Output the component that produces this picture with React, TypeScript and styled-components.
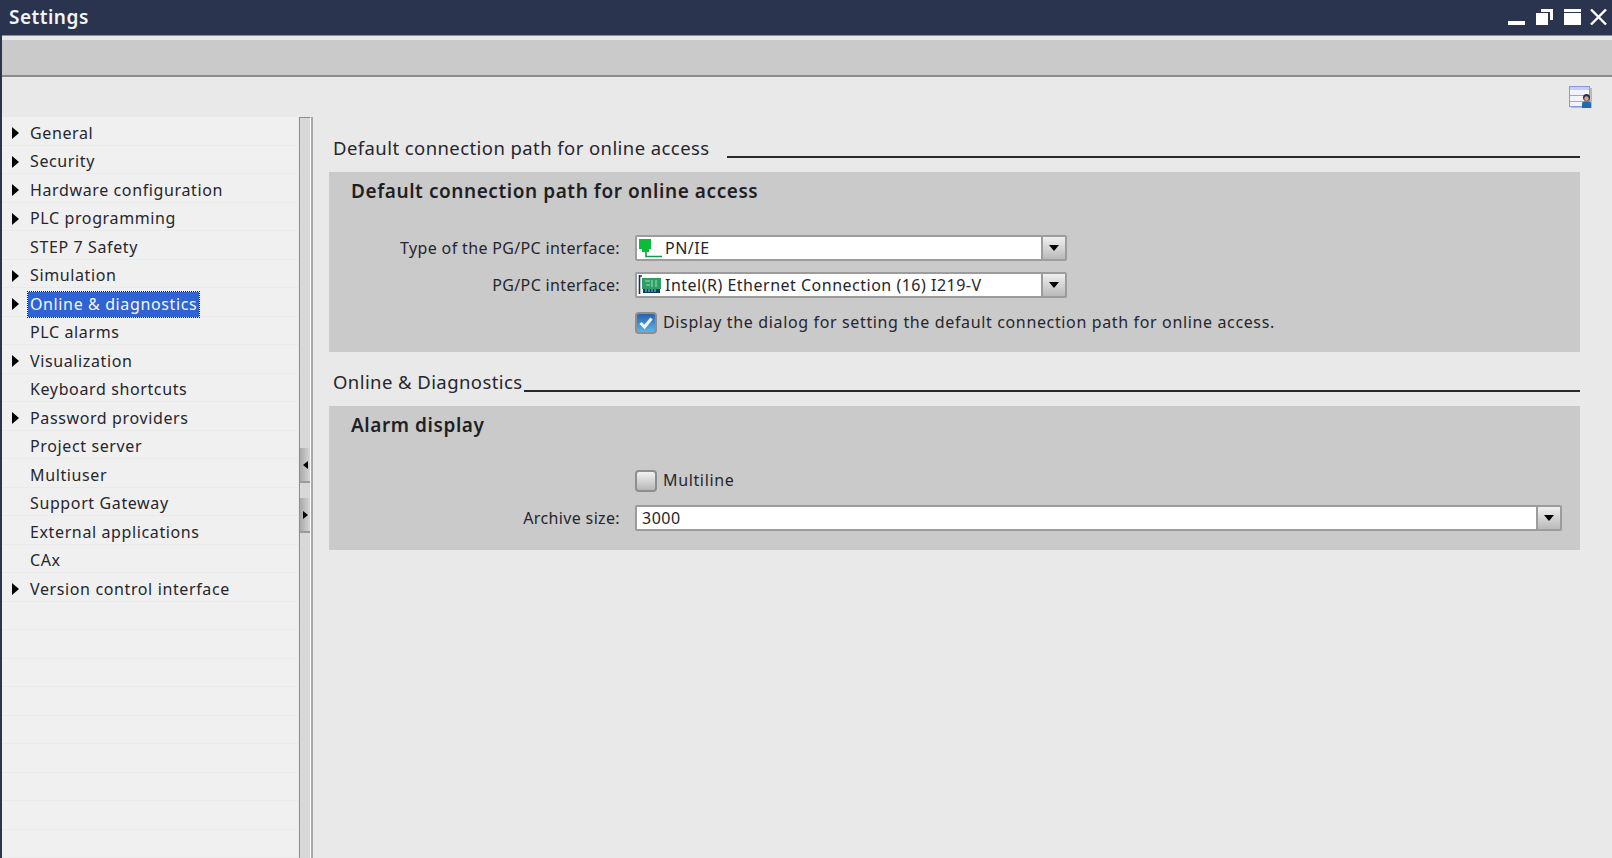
import React from 'react';
import styled, { createGlobalStyle } from 'styled-components';

const GlobalStyle = createGlobalStyle`
  html, body {
    margin: 0;
    padding: 0;
    height: 100%;
    overflow: hidden;
    background: #e9e9e9;
  }
  body {
    font-family: "Noto Sans", "Open Sans", sans-serif;
    color: #26262e;
  }
`;

const Page = styled.div`
  width: 1612px;
  height: 858px;
  box-sizing: border-box;
  border-left: 2px solid #2b344f;
  display: flex;
  flex-direction: column;
  overflow: hidden;
`;

const TitleBar = styled.div`
  height: 33px;
  flex: none;
  background: #2b344f;
  display: flex;
  align-items: center;
  justify-content: space-between;
  padding: 0 5px 2px 7px;
  border-bottom: 1px solid #8a8f9c;
`;

const Title = styled.div`
  color: #f2f4f8;
  font-size: 19px;
  font-weight: 600;
  letter-spacing: 0.5px;
`;

const WindowButtons = styled.div`
  display: flex;
  align-items: center;
  gap: 11px;
`;

const Toolbar = styled.div`
  height: 35px;
  flex: none;
  margin-top: 4px;
  background: #cacaca;
  border-bottom: 2px solid #8b8b8b;
`;

const Body = styled.div`
  flex: 1;
  min-height: 0;
  display: flex;
  background: #e9e9e9;
`;

const Nav = styled.div`
  width: 296px;
  flex: none;
  margin-top: 40px;
  background: #f0f0f0;
`;

const Row = styled.div`
  height: 28.5px;
  box-sizing: border-box;
  display: flex;
  align-items: center;
  padding: 5px 0 0 10px;
  border-bottom: 1px solid #eaeaea;
`;

const Caret = styled.span<{ $visible: boolean }>`
  width: 0;
  height: 0;
  flex: none;
  margin-right: 9px;
  border-style: solid;
  border-width: 6px 0 6px 7px;
  border-color: transparent transparent transparent ${(p) => (p.$visible ? '#000' : 'transparent')};
`;

const RowLabel = styled.span<{ $selected?: boolean }>`
  font-size: 16px;
  line-height: 25px;
  padding: 0 2px;
  letter-spacing: 0.62px;
  white-space: nowrap;
  color: ${(p) => (p.$selected ? '#f4f7ff' : '#26262e')};
  background: ${(p) => (p.$selected ? '#2f62d2' : 'transparent')};
  outline: ${(p) => (p.$selected ? '1px dotted #10204a' : 'none')};
`;

const Splitter = styled.div`
  width: 10px;
  flex: none;
  margin: 40px 0 0 1px;
  padding-top: 330px;
  background: #d8d8d8;
  border-left: 1px solid #8f8f8f;
  border-right: 1px solid #fff;
  border-top: 1px solid #8f8f8f;
  box-shadow: 2px 0 0 #a9a9a9;
`;

const SplitButton = styled.div`
  height: 33px;
  margin-bottom: 15px;
  display: flex;
  align-items: center;
  justify-content: center;
  background: linear-gradient(90deg, #a9a9a9, #d6d6d6);
  border-bottom: 2px solid #9a9a9a;
`;

const SplitArrow = styled.span<{ $dir: 'left' | 'right' }>`
  width: 0;
  height: 0;
  border-style: solid;
  border-width: 4px 0 4px 5px;
  border-color: transparent transparent transparent #000;
  transform: ${(p) => (p.$dir === 'left' ? 'rotate(180deg)' : 'none')};
`;

const Content = styled.div`
  flex: 1;
  min-width: 0;
  display: flex;
  flex-direction: column;
  padding: 9px 32px 0 18px;
`;

const IconRow = styled.div`
  height: 22px;
  display: flex;
  justify-content: flex-end;
  margin-right: -13px;
`;

const SectionHead = styled.div<{ $top: number }>`
  height: 24px;
  margin-top: ${(p) => p.$top}px;
  padding-left: 4px;
  display: flex;
  align-items: flex-end;
`;

const SectionTitle = styled.div`
  font-size: 18.5px;
  line-height: 24px;
  letter-spacing: 0.42px;
  white-space: nowrap;
  margin-bottom: -2px;
`;

const SectionLine = styled.div<{ $gap: number }>`
  flex: 1;
  height: 2px;
  margin-left: ${(p) => p.$gap}px;
  background: #2a2a2a;
`;

const Panel = styled.div<{ $height: number }>`
  margin-top: 14px;
  height: ${(p) => p.$height}px;
  box-sizing: border-box;
  background: #cacaca;
  padding-top: 7px;
`;

const PanelTitle = styled.div`
  height: 24px;
  line-height: 24px;
  padding-left: 22px;
  font-size: 19px;
  font-weight: 600;
  letter-spacing: 0.57px;
  color: #1f1f24;
  white-space: nowrap;
`;

const FormRow = styled.div<{ $top: number; $right?: number }>`
  display: flex;
  align-items: center;
  margin-top: ${(p) => p.$top}px;
  padding-right: ${(p) => p.$right ?? 0}px;
`;

const FieldLabel = styled.div`
  width: 291px;
  flex: none;
  margin-right: 15px;
  text-align: right;
  font-size: 16px;
  letter-spacing: 0.35px;
  white-space: nowrap;
`;

const Combo = styled.div<{ $width?: number }>`
  height: 26px;
  box-sizing: border-box;
  display: flex;
  flex: ${(p) => (p.$width ? 'none' : '1')};
  width: ${(p) => (p.$width ? `${p.$width}px` : 'auto')};
  background: #fff;
  border: 2px solid #9c9c9c;
  border-radius: 2px;
`;

const ComboValue = styled.div<{ $pad: number }>`
  flex: 1;
  min-width: 0;
  display: flex;
  align-items: center;
  gap: 3px;
  padding-left: ${(p) => p.$pad}px;
  font-size: 16px;
  letter-spacing: 0.5px;
  white-space: nowrap;
`;

const ComboButton = styled.div`
  width: 22px;
  flex: none;
  display: flex;
  align-items: center;
  justify-content: center;
  background: linear-gradient(#f0f0f0, #b9b9b9);
  border-left: 2px solid #9c9c9c;
`;

const ComboArrow = styled.span`
  width: 0;
  height: 0;
  border-style: solid;
  border-width: 6px 5.5px 0;
  border-color: #000 transparent transparent;
`;

const Check = styled.div<{ $checked?: boolean }>`
  width: 22px;
  height: 22px;
  flex: none;
  box-sizing: border-box;
  display: flex;
  align-items: center;
  justify-content: center;
  border: 2px solid #8e8e8e;
  border-radius: 4px;
  background: ${(p) =>
    p.$checked ? 'linear-gradient(#2a62ae, #58b6ea)' : 'linear-gradient(#f2f2f2, #b7b7b7)'};
`;

const CheckRow = styled.div<{ $top: number }>`
  display: flex;
  align-items: center;
  gap: 6px;
  margin-top: ${(p) => p.$top}px;
  margin-left: 306px;
  font-size: 16px;
  letter-spacing: 0.64px;
  white-space: nowrap;
`;

const CheckText = styled.span`
  margin-top: -2px;
`;

const CloseGlyph = styled.svg`
  margin-left: -2px;
`;

const treeItems = [
  { label: 'General', caret: true },
  { label: 'Security', caret: true },
  { label: 'Hardware configuration', caret: true },
  { label: 'PLC programming', caret: true },
  { label: 'STEP 7 Safety', caret: false },
  { label: 'Simulation', caret: true },
  { label: 'Online & diagnostics', caret: true, selected: true },
  { label: 'PLC alarms', caret: false },
  { label: 'Visualization', caret: true },
  { label: 'Keyboard shortcuts', caret: false },
  { label: 'Password providers', caret: true },
  { label: 'Project server', caret: false },
  { label: 'Multiuser', caret: false },
  { label: 'Support Gateway', caret: false },
  { label: 'External applications', caret: false },
  { label: 'CAx', caret: false },
  { label: 'Version control interface', caret: true },
  { label: '', caret: false },
  { label: '', caret: false },
  { label: '', caret: false },
  { label: '', caret: false },
  { label: '', caret: false },
  { label: '', caret: false },
  { label: '', caret: false },
  { label: '', caret: false },
  { label: '', caret: false },
];

const MinimizeIcon = () => (
  <svg width="17" height="16" viewBox="0 0 17 16">
    <rect x="0" y="12" width="17" height="4" fill="#fff" />
  </svg>
);

const RestoreIcon = () => (
  <svg width="17" height="16" viewBox="0 0 17 16">
    <path d="M5 0h12v11h-3V3H5z" fill="#fff" />
    <rect x="0" y="4" width="12" height="12" fill="#fff" />
  </svg>
);

const MaximizeIcon = () => (
  <svg width="17" height="16" viewBox="0 0 17 16">
    <rect x="0" y="0" width="17" height="3" fill="#fff" />
    <rect x="0" y="4" width="17" height="12" fill="#fff" />
  </svg>
);

const CloseIcon = () => (
  <CloseGlyph width="17" height="16" viewBox="0 0 17 16">
    <path d="M1 0.5 16 15.5M16 0.5 1 15.5" stroke="#fff" strokeWidth="2.4" fill="none" />
  </CloseGlyph>
);

const SettingsIcon = () => (
  <svg width="24" height="23" viewBox="0 0 24 23">
    <rect x="2" y="2" width="21" height="20" fill="#9a9a9a" opacity="0.6" />
    <rect x="0.5" y="0.5" width="20" height="20" fill="#f2f3fb" stroke="#8b95ea" />
    <rect x="1" y="1" width="19" height="3" fill="#c9cdf0" />
    <path d="M1 9.5h19M1 15.5h19" stroke="#9aa2e8" strokeWidth="1" />
    <circle cx="17.5" cy="11.5" r="3.5" fill="#2b2b4a" />
    <circle cx="17.5" cy="12.500" r="2.200" fill="#d9a67e" />
    <path d="M13 22v-4.500c0-1.500 1.500-2 4.500-2s4.500.5 4.500 2V22z" fill="#1f6bad" />
  </svg>
);

const PnIeIcon = () => (
  <svg width="24" height="20" viewBox="0 0 24 20">
    <rect x="1" y="1" width="12" height="10" fill="#0cbc38" />
    <rect x="4" y="11" width="7" height="3" fill="#0cbc38" />
    <path d="M8 14v4.500H24" stroke="#129a48" strokeWidth="1.6" fill="none" />
  </svg>
);

const NetworkCardIcon = () => (
  <svg width="24" height="20" viewBox="0 0 24 20">
    <path d="M1.500 0v19" stroke="#18345c" strokeWidth="1.6" />
    <path d="M1 1h3" stroke="#18345c" strokeWidth="1.4" />
    <rect x="4" y="3" width="19" height="11" fill="#2aa066" />
    <path d="M7 6h5M14 5v7M18 5v7M8 10h4" stroke="#a5e0b0" strokeWidth="1" />
    <rect x="5" y="14" width="17" height="4" fill="#123a66" />
    <path d="M8 14v3M11 14v3M14 14v3M17 14v3" stroke="#9ec6e6" strokeWidth="1" />
  </svg>
);

const CheckMark = () => (
  <svg width="16" height="14" viewBox="0 0 16 14">
    <path d="M2.500 7 6.500 11 13.500 2.500" stroke="#f4f8fc" strokeWidth="3" fill="none" />
  </svg>
);

export default function App() {
  return (
    <Page>
      <GlobalStyle />
      <TitleBar>
        <Title>Settings</Title>
        <WindowButtons>
          <MinimizeIcon />
          <RestoreIcon />
          <MaximizeIcon />
          <CloseIcon />
        </WindowButtons>
      </TitleBar>
      <Toolbar />
      <Body>
        <Nav>
          {treeItems.map((item, i) => (
            <Row key={i}>
              <Caret $visible={item.caret} />
              <RowLabel $selected={item.selected}>{item.label}</RowLabel>
            </Row>
          ))}
        </Nav>
        <Splitter>
          <SplitButton>
            <SplitArrow $dir="left" />
          </SplitButton>
          <SplitButton>
            <SplitArrow $dir="right" />
          </SplitButton>
        </Splitter>
        <Content>
          <IconRow>
            <SettingsIcon />
          </IconRow>
          <SectionHead $top={26}>
            <SectionTitle>Default connection path for online access</SectionTitle>
            <SectionLine $gap={17} />
          </SectionHead>
          <Panel $height={180}>
            <PanelTitle>Default connection path for online access</PanelTitle>
            <FormRow $top={32}>
              <FieldLabel>Type of the PG/PC interface:</FieldLabel>
              <Combo $width={432}>
                <ComboValue $pad={1}>
                  <PnIeIcon />
                  PN/IE
                </ComboValue>
                <ComboButton>
                  <ComboArrow />
                </ComboButton>
              </Combo>
            </FormRow>
            <FormRow $top={11}>
              <FieldLabel>PG/PC interface:</FieldLabel>
              <Combo $width={432}>
                <ComboValue $pad={1}>
                  <NetworkCardIcon />
                  Intel(R) Ethernet Connection (16) I219-V
                </ComboValue>
                <ComboButton>
                  <ComboArrow />
                </ComboButton>
              </Combo>
            </FormRow>
            <CheckRow $top={14}>
              <Check $checked>
                <CheckMark />
              </Check>
              <CheckText>Display the dialog for setting the default connection path for online access.</CheckText>
            </CheckRow>
          </Panel>
          <SectionHead $top={16}>
            <SectionTitle>Online &amp; Diagnostics</SectionTitle>
            <SectionLine $gap={1} />
          </SectionHead>
          <Panel $height={144}>
            <PanelTitle>Alarm display</PanelTitle>
            <CheckRow $top={33}>
              <Check />
              <CheckText>Multiline</CheckText>
            </CheckRow>
            <FormRow $top={13} $right={18}>
              <FieldLabel>Archive size:</FieldLabel>
              <Combo>
                <ComboValue $pad={5}>3000</ComboValue>
                <ComboButton>
                  <ComboArrow />
                </ComboButton>
              </Combo>
            </FormRow>
          </Panel>
        </Content>
      </Body>
    </Page>
  );
}
